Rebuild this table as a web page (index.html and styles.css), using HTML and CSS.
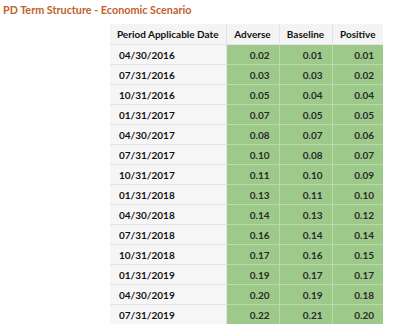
FILE: index.html
```html
<!DOCTYPE html>
<html>
<head>
<meta charset="utf-8">
<link rel="stylesheet" href="styles.css">
</head>
<body>
<h1 class="title">PD Term Structure - Economic Scenario</h1>
<table class="grid">
  <colgroup>
    <col class="c-date"><col class="c-num"><col class="c-num"><col class="c-num2">
  </colgroup>
  <thead>
    <tr><th>Period Applicable Date</th><th>Adverse</th><th>Baseline</th><th>Positive</th></tr>
  </thead>
  <tbody>
    <tr><td class="date">04/30/2016</td><td>0.02</td><td>0.01</td><td>0.01</td></tr>
    <tr><td class="date">07/31/2016</td><td>0.03</td><td>0.03</td><td>0.02</td></tr>
    <tr><td class="date">10/31/2016</td><td>0.05</td><td>0.04</td><td>0.04</td></tr>
    <tr><td class="date">01/31/2017</td><td>0.07</td><td>0.05</td><td>0.05</td></tr>
    <tr><td class="date">04/30/2017</td><td>0.08</td><td>0.07</td><td>0.06</td></tr>
    <tr><td class="date">07/31/2017</td><td>0.10</td><td>0.08</td><td>0.07</td></tr>
    <tr><td class="date">10/31/2017</td><td>0.11</td><td>0.10</td><td>0.09</td></tr>
    <tr><td class="date">01/31/2018</td><td>0.13</td><td>0.11</td><td>0.10</td></tr>
    <tr><td class="date">04/30/2018</td><td>0.14</td><td>0.13</td><td>0.12</td></tr>
    <tr><td class="date">07/31/2018</td><td>0.16</td><td>0.14</td><td>0.14</td></tr>
    <tr><td class="date">10/31/2018</td><td>0.17</td><td>0.16</td><td>0.15</td></tr>
    <tr><td class="date">01/31/2019</td><td>0.19</td><td>0.17</td><td>0.17</td></tr>
    <tr><td class="date">04/30/2019</td><td>0.20</td><td>0.19</td><td>0.18</td></tr>
    <tr><td class="date">07/31/2019</td><td>0.22</td><td>0.21</td><td>0.20</td></tr>
  </tbody>
</table>
</body>
</html>
```
FILE: styles.css
```css
html, body {
  margin: 0;
  padding: 0;
  background: #ffffff;
}
body {
  font-family: Lato, "Open Sans", sans-serif;
  color: #1f1f1f;
}
.title {
  margin: 0;
  padding: 3px 0 0 3px;
  height: 21px;
  box-sizing: border-box;
  font-size: 10.8px;
  font-weight: 700;
  line-height: 13px;
  color: #c0622b;
}
.grid {
  margin-left: 110px;
  margin-top: 3px;
  border-collapse: collapse;
  table-layout: fixed;
  width: 273px;
  font-size: 10px;
  font-weight: 700;
}
.c-date { width: 116px; }
.c-num { width: 53px; }
.c-num2 { width: 51px; }
.grid th {
  height: 20px;
  padding: 0;
  background: #f4f4f4;
  border: 1px solid #e4e4e4;
  border-top: none;
  text-align: center;
  font-weight: 700;
  color: #111111;
}
.grid th:first-child { border-left: none; }
.grid th:last-child { border-right: none; }
.grid td {
  height: 19px;
  padding: 0 9px 0 0;
  background: #9dc98a;
  border: 1px solid #b9dbaa;
  text-align: right;
  color: #2a2a2a;
}
.grid td:last-child { border-right: none; }
.grid tr:last-child td { border-bottom: none; }
.grid td.date {
  padding: 0 0 0 9px;
  text-align: left;
  background: #f6f6f6;
  border: 1px solid #e4e4e4;
  border-left: none;
  color: #111111;
}
.grid tr:last-child td.date { border-bottom: none; }
```
